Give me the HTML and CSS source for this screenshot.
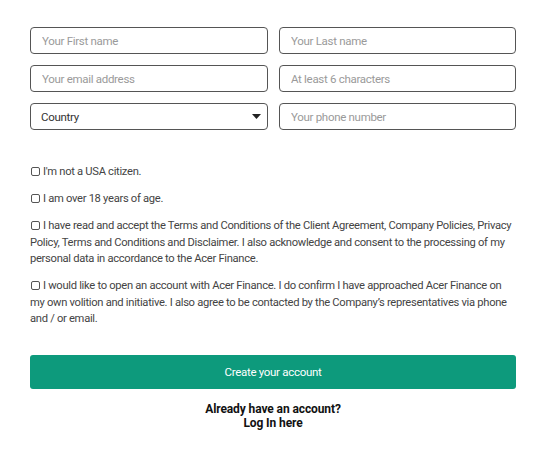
FILE: index.html
```html
<!DOCTYPE html>
<html>
<head>
<meta charset="utf-8">
<link rel="stylesheet" href="styles.css">
</head>
<body>
<form class="signup">
  <div class="grid">
    <input class="field" type="text" placeholder="Your First name">
    <input class="field" type="text" placeholder="Your Last name">
    <input class="field" type="email" placeholder="Your email address">
    <input class="field" type="password" placeholder="At least 6 characters">
    <div class="select">
      <span>Country</span>
      <svg class="caret" width="9" height="5" viewBox="0 0 9 5"><path d="M0 0H9L4.5 5Z" fill="#222"/></svg>
    </div>
    <input class="field" type="tel" placeholder="Your phone number">
  </div>
  <div class="checks">
    <label class="check"><span class="box"></span>I'm not a USA citizen.</label>
    <label class="check"><span class="box"></span>I am over 18 years of age.</label>
    <label class="check"><span class="box"></span>I have read and accept the Terms and Conditions of the Client Agreement, Company Policies, Privacy Policy, Terms and Conditions and Disclaimer. I also acknowledge and consent to the processing of my personal data in accordance to the Acer Finance.</label>
    <label class="check"><span class="box"></span>I would like to open an account with Acer Finance. I do confirm I have approached Acer Finance on my own volition and initiative. I also agree to be contacted by the Company’s representatives via phone and / or email.</label>
  </div>
  <button class="submit" type="button">Create your account</button>
  <p class="login">Already have an account?<br>Log In here</p>
</form>
</body>
</html>
```
FILE: styles.css
```css
* { box-sizing: border-box; }
body {
  margin: 0;
  background: #fff;
  font-family: Roboto, "Noto Sans", sans-serif;
  color: #444;
}
.signup {
  width: 486px;
  margin: 27px 0 0 30px;
}
.grid {
  display: grid;
  grid-template-columns: 238px 237px;
  column-gap: 11px;
  row-gap: 11px;
}
.field, .select {
  height: 27px;
  border: 1px solid #555;
  border-radius: 4px;
  padding: 0 11px;
  font-family: inherit;
  font-size: 11.5px;
  letter-spacing: -0.3px;
  color: #333;
  background: #fff;
  outline: none;
  width: 100%;
}
.field::placeholder { color: #9a9a9a; }
.select {
  display: flex;
  align-items: center;
  justify-content: space-between;
  padding: 0 6px 0 10px;
  color: #333;
}
.caret { display: block; }
.checks {
  margin-top: 34px;
  font-size: 11.2px;
  letter-spacing: -0.3px;
  line-height: 16.5px;
  color: #444;
}
.check {
  display: block;
  margin-bottom: 10.5px;
}
.box {
  display: inline-block;
  width: 9px;
  height: 9px;
  border: 1px solid #555;
  border-radius: 2px;
  margin: 0 3px 0 1px;
  vertical-align: -1px;
}
.submit {
  display: block;
  width: 100%;
  height: 34px;
  margin-top: 27px;
  border: none;
  border-radius: 3px;
  background: #0d9a7c;
  color: #fff;
  font-family: inherit;
  font-size: 11.5px;
  letter-spacing: -0.3px;
}
.login {
  margin: 13px 0 0;
  text-align: center;
  font-size: 12px;
  letter-spacing: -0.1px;
  line-height: 14px;
  font-weight: 700;
  color: #111;
}
```
